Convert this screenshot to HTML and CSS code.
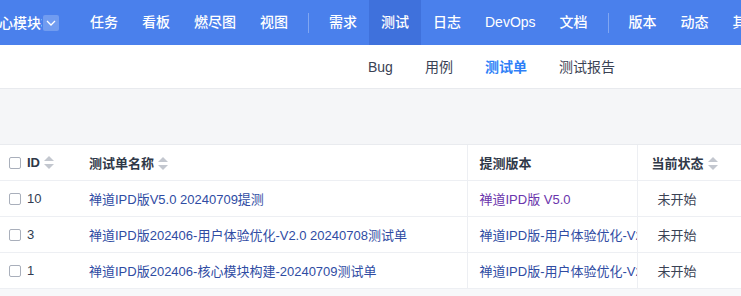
FILE: index.html
```html
<!DOCTYPE html>
<html>
<head lang="zh">
    <meta charset="UTF-8">
    <title>测试单</title>
    <link rel="stylesheet" href="styles.css">
</head>
<body>
    <div class="topbar">
        <div class="product">
            <span class="product-name">核心模块构建</span>
            <span class="product-drop">
                <svg width="10" height="6" viewBox="0 0 10 6"><path d="M1 1l4 4 4-4" fill="none" stroke="#fff" stroke-width="1.3"/></svg>
            </span>
        </div>
        <ul class="nav">
            <li>任务</li>
            <li>看板</li>
            <li>燃尽图</li>
            <li>视图</li>
            <li class="divider"></li>
            <li>需求</li>
            <li class="active">测试</li>
            <li>日志</li>
            <li>DevOps</li>
            <li>文档</li>
            <li class="divider"></li>
            <li>版本</li>
            <li>动态</li>
            <li>其他</li>
        </ul>
    </div>
    <div class="subnav">
        <a>Bug</a>
        <a>用例</a>
        <a class="active">测试单</a>
        <a>测试报告</a>
    </div>
    <div class="toolbar"></div>
    <div class="grid">
        <table>
            <colgroup>
                <col style="width:77px">
                <col style="width:390px">
                <col style="width:170px">
                <col style="width:100px">
                <col style="width:100px">
            </colgroup>
            <thead>
                <tr>
                    <th><span class="check"></span>ID<i class="sort"></i></th>
                    <th>测试单名称<i class="sort"></i></th>
                    <th class="bordered">提测版本</th>
                    <th class="status">当前状态<i class="sort"></i></th>
                    <th>负责人</th>
                </tr>
            </thead>
            <tbody>
                <tr>
                    <td><span class="check"></span>10</td>
                    <td><a>禅道IPD版V5.0 20240709提测</a></td>
                    <td class="bordered"><a class="visited">禅道IPD版 V5.0</a></td>
                    <td class="status-val">未开始</td>
                    <td></td>
                </tr>
                <tr>
                    <td><span class="check"></span>3</td>
                    <td><a>禅道IPD版202406-用户体验优化-V2.0 20240708测试单</a></td>
                    <td class="bordered"><a>禅道IPD版-用户体验优化-V2.0</a></td>
                    <td class="status-val">未开始</td>
                    <td></td>
                </tr>
                <tr>
                    <td><span class="check"></span>1</td>
                    <td><a>禅道IPD版202406-核心模块构建-20240709测试单</a></td>
                    <td class="bordered"><a>禅道IPD版-用户体验优化-V2.0</a></td>
                    <td class="status-val">未开始</td>
                    <td></td>
                </tr>
            </tbody>
        </table>
    </div>
</body>
</html>
```

FILE: styles.css
```css
* {
    margin: 0;
    padding: 0;
    list-style: none;
    box-sizing: border-box;
}
body {
    width: 741px;
    overflow: hidden;
    background: #f7f8fa;
    font-family: "Liberation Sans", "Noto Sans CJK SC", sans-serif;
    color: #313c52;
}
.topbar {
    height: 45px;
    background: #4a80ec;
    display: flex;
    align-items: center;
    color: #fff;
    white-space: nowrap;
    overflow: hidden;
}
.product {
    display: flex;
    align-items: center;
    width: 78px;
    flex: none;
}
.product-name {
    width: 42px;
    overflow: hidden;
    font-size: 14px;
    font-weight: 500;
    text-indent: -15px;
    line-height: 20px;
}
.product-drop {
    width: 16px;
    height: 16px;
    margin-left: 1px;
    border-radius: 2px;
    background: rgba(255,255,255,0.22);
    display: flex;
    align-items: center;
    justify-content: center;
}
.nav {
    display: flex;
    align-items: center;
    height: 45px;
}
.nav li {
    padding: 0 12px;
    height: 45px;
    line-height: 45px;
    font-size: 14px;
    font-weight: 500;
    flex: none;
}
.nav li.active {
    background: #3f71dc;
}
.nav li.divider {
    width: 1px;
    height: 20px;
    padding: 0;
    margin: 0 8px;
    background: rgba(255,255,255,0.3);
}
.subnav {
    height: 44px;
    background: #fff;
    border-bottom: 1px solid #e8eaee;
    display: flex;
    align-items: center;
    gap: 32px;
    padding-left: 368px;
    font-size: 14px;
}
.subnav a {
    color: #3a4254;
    line-height: 20px;
}
.subnav a.active {
    color: #2e7ff7;
    font-weight: 600;
}
.toolbar {
    height: 55px;
    background: #f5f6f8;
}
.grid {
    overflow: hidden;
    border-top: 1px solid #e9ebef;
}
.grid table {
    width: 837px;
    table-layout: fixed;
    border-collapse: collapse;
    background: #fff;
    font-size: 13px;
}
.grid th,
.grid td {
    height: 36px;
    padding: 0 12px;
    text-align: left;
    white-space: nowrap;
    overflow: hidden;
    border-bottom: 1px solid #edeff3;
    vertical-align: middle;
}
.grid th {
    font-weight: 600;
    color: #2f3848;
    height: 35px;
}
.grid th:first-child,
.grid td:first-child {
    padding-left: 9px;
}
.grid .bordered {
    border-left: 1px solid #edeff3;
    border-right: 1px solid #edeff3;
}
.grid .status {
    padding-left: 14px;
}
.grid .status-val {
    padding-left: 20px;
    color: #3a4254;
}
.check {
    display: inline-block;
    width: 12px;
    height: 12px;
    border: 1px solid #a9afbb;
    border-radius: 2px;
    vertical-align: -2px;
    margin-right: 6px;
    background: #fff;
}
.sort {
    display: inline-block;
    width: 10px;
    height: 13px;
    margin-left: 4px;
    vertical-align: -2px;
    position: relative;
}
.sort:before,
.sort:after {
    content: "";
    position: absolute;
    left: 0;
    border-left: 5px solid transparent;
    border-right: 5px solid transparent;
}
.sort:before {
    top: 0;
    border-bottom: 5px solid #c3c7cf;
}
.sort:after {
    bottom: 0;
    border-top: 5px solid #c3c7cf;
}
.grid a {
    color: #2f4ca3;
}
.grid a.visited {
    color: #6a35ac;
}
```
